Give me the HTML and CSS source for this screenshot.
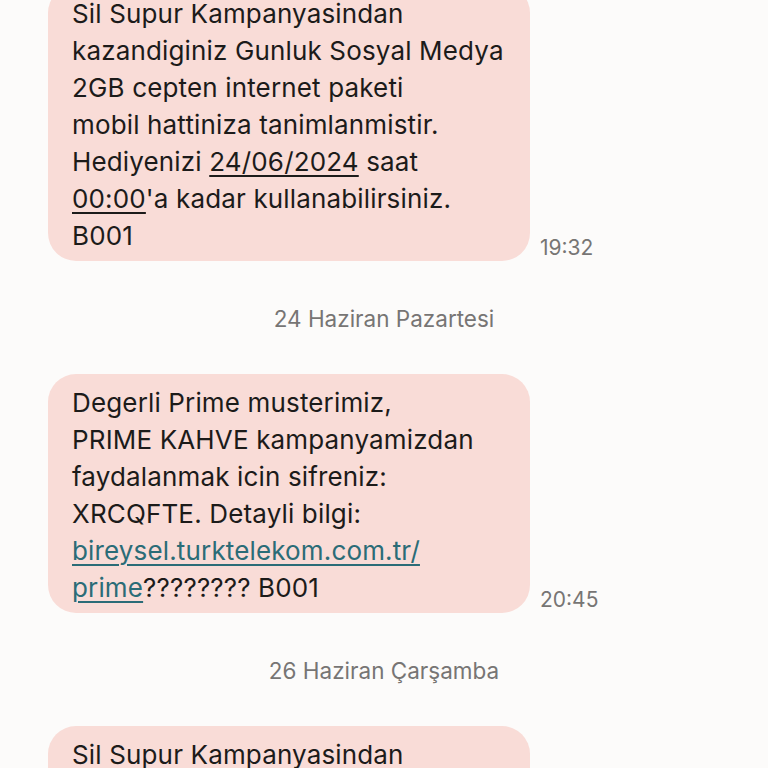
FILE: index.html
```html
<!DOCTYPE html>
<html lang="tr">
<head>
<meta charset="utf-8">
<link rel="stylesheet" href="styles.css">
</head>
<body>
<div class="thread">
  <div class="row">
    <div class="bubble">Sil Supur Kampanyasindan<br>kazandiginiz Gunluk Sosyal Medya<br>2GB cepten internet paketi<br>mobil hattiniza tanimlanmistir.<br>Hediyenizi <span class="u">24/06/2024</span> saat<br><span class="u">00:00</span>'a kadar kullanabilirsiniz.<br>B001</div>
    <div class="time">19:32</div>
  </div>
  <div class="date">24 Haziran Pazartesi</div>
  <div class="row">
    <div class="bubble">Degerli Prime musterimiz,<br>PRIME KAHVE kampanyamizdan<br>faydalanmak icin sifreniz:<br>XRCQFTE. Detayli bilgi:<br><span class="link">bireysel.turktelekom.com.tr/</span><br><span class="link">prime</span>???????? B001</div>
    <div class="time">20:45</div>
  </div>
  <div class="date">26 Haziran Çarşamba</div>
  <div class="row">
    <div class="bubble">Sil Supur Kampanyasindan<br>kazandiginiz Gunluk Sosyal Medya<br>2GB cepten internet paketi</div>
  </div>
</div>
</body>
</html>
```
FILE: styles.css
```css
html, body {
  margin: 0;
  padding: 0;
  background: #fcfbfa;
  overflow: hidden;
  height: 768px;
}
.thread {
  display: flex;
  flex-direction: column;
  padding-left: 48px;
  margin-top: -15px;
  font-family: Inter, "Noto Sans", sans-serif;
}
.row {
  display: flex;
  align-items: flex-end;
}
.bubble {
  width: 434px;
  background: #f9dcd7;
  border-radius: 28px;
  padding: 10px 24px 7px 24px;
  font-size: 26px;
  line-height: 37px;
  letter-spacing: 0.15px;
  color: #1c1b1a;
}
.time {
  margin-left: 10px;
  margin-bottom: -1px;
  font-size: 21px;
  line-height: 28px;
  color: #777574;
}
.date {
  text-align: center;
  font-size: 22.5px;
  line-height: 28px;
  color: #777574;
  margin: 44px 0 41px 0;
  padding-right: 48px;
}
.u {
  text-decoration: underline;
  text-underline-offset: 4px;
  text-decoration-thickness: 2px;
}
.link {
  color: #2b6c77;
  text-decoration: underline;
  text-underline-offset: 4px;
  text-decoration-thickness: 2px;
}
```
